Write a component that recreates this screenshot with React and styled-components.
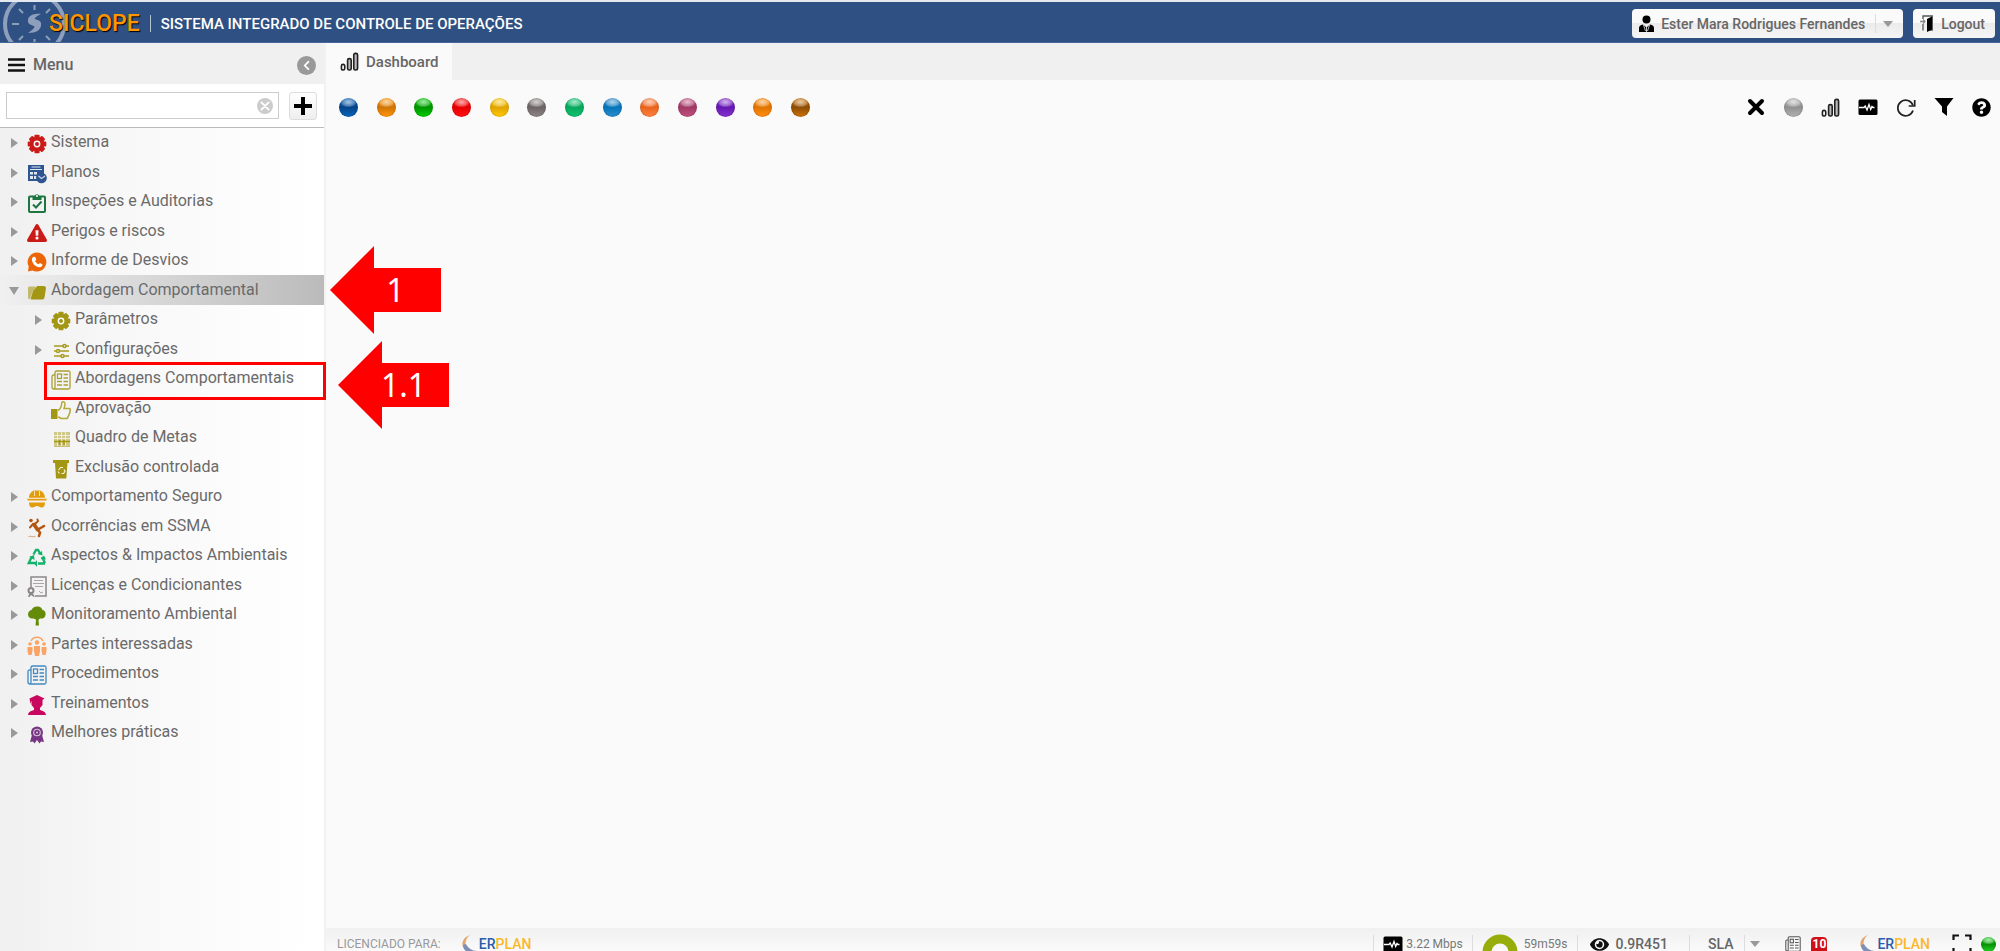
import React from "react";
import styled, { createGlobalStyle, css } from "styled-components";
import { FaExclamationTriangle, FaQuestionCircle, FaChevronLeft, FaEye } from "react-icons/fa";

const GlobalStyle = createGlobalStyle`
  * { box-sizing: border-box; }
  body { margin: 0; font-family: Roboto, "Liberation Sans", sans-serif; color: #666; background: #fafafa; }
  button, input { font: inherit; color: inherit; }
  button { padding: 0; border: 0; background: none; cursor: pointer; }
  a { color: inherit; text-decoration: none; }
  ul { margin: 0; padding: 0; list-style: none; }
  svg { display: block; flex: none; }
`;

/* ---------- page frame ---------- */

const Page = styled.div`
  height: 100vh;
  display: flex;
  flex-direction: column;
  overflow: hidden;
`;

const Header = styled.header`
  flex: none;
  height: 43px;
  border-top: 2px solid #e4e9ef;
  border-bottom: 1px solid #46659a;
  background: #2f5082;
  display: flex;
  align-items: center;
  gap: 10px;
  padding: 3px 5px 0 0;
  overflow: hidden;
`;

const Brand = styled.div`
  display: flex;
  align-items: center;
`;

const BrandName = styled.span`
  margin-left: -20px;
  font-size: 23px;
  line-height: 28px;
  font-weight: 500;
  color: #ff9500;
  text-shadow: 1px 1px 1px #000;
`;

const HeaderRule = styled.span`
  width: 1px;
  height: 17px;
  background: #b4c1d5;
`;

const SystemTitle = styled.h1`
  margin: 0;
  flex: 1;
  font-size: 15px;
  line-height: 20px;
  font-weight: 500;
  color: #fff;
`;

const HeaderButton = styled.button`
  height: 29px;
  padding: 0 10px 0 7px;
  display: flex;
  align-items: center;
  gap: 7px;
  border-radius: 4px;
  background: linear-gradient(#fafafa 50%, #ebebeb 50%, #f6f6f6);
  font-size: 14px;
  line-height: 20px;
  font-weight: 500;
  white-space: nowrap;
`;

const Split = styled.span`
  width: 1px;
  height: 19px;
  margin-left: ${(p) => p.$space || 0}px;
  background: #ddd;
`;

const Caret = styled.span`
  width: 0;
  height: 0;
  border: 5px solid transparent;
  border-bottom: 0;
  border-top: 6px solid #999;
`;

const Body = styled.div`
  flex: 1;
  min-height: 0;
  display: flex;
`;

/* ---------- side menu ---------- */

const Sidebar = styled.nav`
  flex: none;
  width: 326px;
  position: relative;
  z-index: 1;
  display: flex;
  flex-direction: column;
  border-right: 2px solid #f2f2f2;
  background: #fff;
`;

const MenuBar = styled.div`
  height: 41px;
  padding: 3px 8px 0;
  display: flex;
  align-items: center;
  gap: 8px;
  background: #f0f0f0;
`;

const MenuTitle = styled.h2`
  margin: 0;
  flex: 1;
  font-size: 16px;
  line-height: 20px;
  font-weight: 500;
`;

const RoundButton = styled.button`
  width: ${(p) => p.$size}px;
  height: ${(p) => p.$size}px;
  display: grid;
  place-items: center;
  border-radius: 50%;
  background: ${(p) => p.$tone};
  color: #fff;
`;

const SearchBar = styled.div`
  height: 44px;
  padding: 0 7px 0 6px;
  display: flex;
  align-items: center;
  gap: 10px;
  border-bottom: 1px solid #bbb;
`;

const SearchField = styled.label`
  flex: 1;
  height: 27px;
  padding: 0 5px;
  display: flex;
  align-items: center;
  border: 1px solid #ccc;
  background: #fff;
`;

const SearchInput = styled.input`
  flex: 1;
  min-width: 0;
  border: 0;
  outline: 0;
  padding: 0;
  background: none;
  font-size: 16px;
`;

const AddButton = styled.button`
  width: 28px;
  height: 28px;
  display: grid;
  place-items: center;
  border: 1px solid #ddd;
  border-radius: 3px;
  background: linear-gradient(#fff, #eee);
`;

const Tree = styled.ul`
  flex: 1;
  background: linear-gradient(to right, #f0f0f0, #f8f8f8 40%, #fff 98%);
`;

const TreeRow = styled.li`
  position: relative;
  height: 29px;
  padding-left: ${(p) => 9 + p.$depth * 24}px;
  display: flex;
  align-items: center;
  &:nth-child(even) { height: 30px; }
  ${(p) => p.$selected && css`background: linear-gradient(to right, #f0f0f0, #bbb);`}
`;

const Toggle = styled.button`
  width: 18px;
  height: 20px;
  display: flex;
  align-items: center;
  padding: 1px 0 0 ${(p) => (p.$open ? 0 : 2)}px;
`;

const ToggleMark = styled.span`
  width: 0;
  height: 0;
  border: 5px solid transparent;
  ${(p) => p.$open
    ? css`border-bottom: 0; border-top: 8px solid #999;`
    : css`border-right: 0; border-left: 7px solid #999;`}
`;

const Leaf = styled.span`
  width: 18px;
`;

const TreeLink = styled.a`
  display: flex;
  align-items: center;
  gap: 4px;
  color: #6a6a6a;
  font-size: 16px;
  line-height: 22px;
  white-space: nowrap;
  svg { margin-top: 3px; }
`;

const TreeLabel = styled.span`
  padding-bottom: 1px;
`;

const Outline = styled.span`
  position: absolute;
  z-index: 1;
  left: 44px;
  right: -2px;
  top: -2px;
  height: 38px;
  border: 3px solid #f00;
  pointer-events: none;
`;

const Callout = styled.span`
  position: absolute;
  z-index: 2;
  left: ${(p) => p.$left}px;
  top: ${(p) => p.$top}px;
  width: 111px;
  height: 88px;
  padding-left: 20px;
  display: grid;
  place-items: center;
  background: #f00;
  clip-path: polygon(0 50%, 44px 0, 44px 25%, 100% 25%, 100% 75%, 44px 75%, 44px 100%);
  color: #fff;
  font-family: "Noto Sans", sans-serif;
  font-size: 32px;
  line-height: 40px;
`;

/* ---------- workspace ---------- */

const Workspace = styled.main`
  flex: 1;
  min-width: 0;
  display: flex;
  flex-direction: column;
  background: #fafafa;
`;

const Tabs = styled.div`
  height: 37px;
  background: #f0f0f0;
`;

const Tab = styled.button`
  height: 37px;
  padding: 0 13px 0 14px;
  display: flex;
  align-items: center;
  gap: 7px;
  background: #fafafa;
  font-size: 15px;
  line-height: 20px;
  font-weight: 500;
`;

const Toolbar = styled.div`
  height: 54px;
  padding: 0 8px 0 13px;
  display: flex;
  align-items: center;
  justify-content: space-between;
`;

const ToolGroup = styled.div`
  width: ${(p) => p.$width}px;
  display: flex;
  align-items: center;
  justify-content: space-between;
`;

const Ball = styled.button`
  flex: none;
  width: ${(p) => p.$size || 19}px;
  height: ${(p) => p.$size || 19}px;
  border-radius: 50%;
  background:
    radial-gradient(ellipse 44% 28% at 50% 22%, rgba(255, 255, 255, 0.65), rgba(255, 255, 255, 0.3) 70%, transparent 100%),
    linear-gradient(${(p) => p.$light} 10%, ${(p) => p.$dark} 48%, ${(p) => p.$light} 95%);
  box-shadow: inset 0 0 1px 1px rgba(0, 0, 0, 0.12);
`;

const IconButton = styled.button`
  width: 20px;
  height: 20px;
  display: grid;
  place-items: center;
  color: #000;
`;

const Canvas = styled.div`
  flex: 1;
  min-height: 0;
`;

/* ---------- status bar ---------- */

const StatusBar = styled.footer`
  flex: none;
  height: 23px;
  overflow: hidden;
  background: linear-gradient(#f0f0f0, #fafafa);
`;

const StatusLine = styled.div`
  height: 32px;
  padding: 0 4px 0 11px;
  display: flex;
  align-items: center;
`;

const StatusItem = styled.div`
  display: flex;
  align-items: center;
  gap: ${(p) => p.$gap || 6}px;
  margin-left: ${(p) => p.$space || 0}px;
  font-size: ${(p) => (p.$strong ? 14 : 12)}px;
  line-height: 14px;
  font-weight: ${(p) => (p.$strong ? 500 : 400)};
  color: ${(p) => p.$tone || "#777"};
  white-space: nowrap;
`;

const Spacer = styled.span`
  flex: 1;
`;

const Badge = styled.span`
  width: 16px;
  height: 14px;
  border-radius: 4px 4px 0 0;
  background: #d01018;
  color: #fff;
  font-weight: 700;
  text-align: center;
`;

const ErplanWord = styled.span`
  font-size: 14px;
  font-weight: 500;
  color: #2a5caa;
  span { color: #fbb829; }
`;

/* ---------- drawings ---------- */

const Svg = ({ w = 20, h = w, box = "0 0 20 20", children, ...rest }) => (
  <svg width={w} height={h} viewBox={box} fill="none" aria-hidden="true" {...rest}>{children}</svg>
);

const Emblem = () => (
  <Svg w={69} h={64} box="0 0 69 64" stroke="#8d9fbd">
    <circle cx="34.500" cy="32" r="29.500" strokeWidth="4" />
    <path strokeWidth="2" d="M12 32h7M34.500 13v5M34.500 47v5M19 17l4 4M50 17l-4 4M19 48l4-4M50 48l-4-4" />
    <path fill="#8d9fbd" stroke="none" d="M41 22c-8-1-14 2-13 8 1 3 4 3 6 4 1 1 0 2-2 4l-4 3c8 0 14-3 13-10-1-3-4-3-6-4-1-1 2-3 6-5z" />
  </Svg>
);

const Gear = ({ color }) => (
  <Svg>
    <g fill={color}>
      {[0, 45, 90, 135].map((a) => (
        <rect key={a} x="7.400" y="0.700" width="5.200" height="18.600" rx="1" transform={`rotate(${a} 10 10)`} />
      ))}
      <circle cx="10" cy="10" r="7.300" />
    </g>
    <circle cx="10" cy="10" r="2.700" stroke="#fff" strokeWidth="1.400" />
  </Svg>
);

const PlanIcon = () => (
  <Svg>
    <path fill="#2f5591" d="M1 1h16v9a6 6 0 0 0-6 7H1z" />
    <path stroke="#dfe6f1" d="M3 5.500h12M4.500 3h9" strokeWidth="1" />
    <path fill="#dfe6f1" d="M3 8h3v2.500H3zM7 8h3v2.500H7zM3 12h3v3H3zM7 12h2.500v3H7z" />
    <circle cx="14.500" cy="14" r="5.300" fill="#2f5591" />
    <path d="M11.500 12l3 2.500 3.500-2.500" stroke="#c9d5e8" strokeWidth="1.200" />
  </Svg>
);

const ClipboardIcon = () => (
  <Svg stroke="#1f7540">
    <rect x="2" y="3.500" width="16" height="15.500" rx="1" strokeWidth="2" />
    <path fill="#1f7540" stroke="none" d="M5.500 3h2.200a2.400 2.400 0 0 1 4.600 0h2.200v4h-9z" />
    <circle cx="10" cy="3" r="1" fill="#fff" stroke="none" />
    <path strokeWidth="2" d="M6 11.500l3 3 5.500-6" />
  </Svg>
);

const PhoneIcon = () => (
  <Svg>
    <path fill="#ec6608" d="M10 .5a9.500 9.500 0 1 1-4.600 17.900L1 19.500l.7-5A9.500 9.500 0 0 1 10 .5z" />
    <path fill="#fff" d="M6.500 4.800l1.800.2 1 2.700-1.200 1.400c.7 1.600 1.900 2.600 3.400 3.200l1.300-1.300 2.600 1.300c.2 1.800-1 3-2.800 3-4-.3-7.300-3.500-7.700-7.500 0-1.400.6-2.500 1.600-3z" />
  </Svg>
);

const FolderIcon = () => (
  <Svg>
    <path fill="#c2ba6c" d="M1 6q0-1.500 1.500-1.500H8L9.500 6H16v2.500H6L3 17H2q-1 0-1-1.500z" />
    <path fill="#a39612" d="M8 7.500l2-3.500h6.500q2.500 0 2.500 2l-1.500 9.500q-.4 2-2 2H3.500L6 9q.4-1.500 2-1.500z" />
  </Svg>
);

const SlidersIcon = () => (
  <Svg stroke="#a89c1c" strokeWidth="1.500">
    <path d="M3 5h15M3 10h15M3 15h15" />
    <g fill="#f8f8f4"><circle cx="13.500" cy="5" r="1.500" /><circle cx="7" cy="10" r="1.500" /><circle cx="11.500" cy="15" r="1.500" /></g>
  </Svg>
);

const NewsIcon = ({ color, size = 20 }) => (
  <Svg w={size} stroke={color} strokeWidth="1.300">
    <path d="M4 5H2.500Q1 5 1 6.500V17q0 2 2 2h14.500q1.500 0 1.500-1.500V2.500Q19 1 17.500 1h-12Q4 1 4 2.500V17q0 1.500-1 2" />
    <rect x="6.500" y="4" width="4" height="4.500" />
    <path d="M12.500 4.500H17M12.500 8H17M6 11.500h5M12.500 11.500H17M6 15h5M12.500 15H17" />
  </Svg>
);

const ThumbIcon = () => (
  <Svg>
    <path fill="#a39612" d="M0 9h6.500v10H0z" />
    <path stroke="#b5a93b" strokeWidth="1.500" d="M7 10.500c2.500-1.500 3.500-4 3.800-7.500.2-2 3.200-1.800 3.200 1 0 1.700-.5 3-1 4.500h5c1.700.4 1.600 2 .7 3 .4 1 0 2-.7 2.500.3 1-.2 2-1 2.400 0 1.300-.6 2.100-2 2.100h-4c-1.500 0-2.500-1.500-4-1.500" />
  </Svg>
);

const BoardIcon = () => (
  <Svg>
    <path fill="#cfc88a" d="M3 3h16v14H3z" />
    <path stroke="#f6f5e8" strokeWidth=".8" d="M2 6.500h18M2 9.500h18M6.500 3v14M10.500 3v14M14.500 3v14" />
    <path stroke="#a39612" strokeWidth="1.500" d="M3 12.500h16M8.500 11v5M13 11v5" />
    <path stroke="#c8c077" d="M3 17.500h16" />
  </Svg>
);

const BinIcon = () => (
  <Svg>
    <path fill="#a39612" d="M2 1h16v3H2zM4 4h12.500l-1.200 15.500H5z" />
    <path stroke="#f4f1d8" strokeWidth="1.200" d="M7.500 11l2-2.500h2.500M13 10.500l1 2-1.500 2H10.500M8.500 14.500L7 12.500" />
  </Svg>
);

const HelmetIcon = () => (
  <Svg fill="#e39c0c">
    <path d="M2 10c0-4 2.300-6.500 5-7.500h6c2.700 1 5 3.500 5 7.500zM.5 10.500h19v2H.5zM2 14.500h16c0 3-1 5-3.500 5-2 0-2.500-1.500-4.500-1.500s-2.500 1.500-4.500 1.500C3 19.500 2 17.500 2 14.500z" />
    <path stroke="#fff" strokeWidth=".7" d="M7.500 3v5M12.500 3v5M1 10.200h18" />
  </Svg>
);

const SlipIcon = () => (
  <Svg stroke="#b4560f" strokeWidth="2" strokeLinecap="round">
    <circle cx="4" cy="2.500" r="1.800" fill="#b4560f" stroke="none" />
    <path strokeWidth="3.800" d="M7 6.500l3.500 5" />
    <path d="M6 6L3 9.500M8 6l3-3-.5-1.500" />
    <path strokeWidth="2.600" d="M11 11.500l6-3.500M10.500 11.500l2.500 3-1 3.500" />
    <path strokeWidth="1.200" stroke="#d8ab86" d="M2 18.500c2-1 4 1 6 0" />
  </Svg>
);

const RecycleIcon = () => (
  <Svg stroke="#13b26b" strokeWidth="2.300">
    <path d="M6.500 7.500L9 3h2l2.500 4M5 9.500L1.800 16H8M18 16l-3-6M11 16.500h7" />
    <path fill="#13b26b" stroke="none" d="M15.500 8.500L10.500 7l4.500-3zM2 10l5-2 .5 5zM10 20l-3-3.500 3-3.500zM13.500 12l3.500-3.500 2 4z" />
  </Svg>
);

const LicenseIcon = () => (
  <Svg w={20} h={22} box="0 0 20 22" stroke="#8d8688">
    <path strokeWidth="1.500" d="M4 11V1h15v19H8" />
    <path d="M7 4.500h9M6 7.500h11M8 10.500h8M12 15l2 2 2-1" stroke="#aaa5a7" />
    <circle cx="4" cy="14.500" r="2.500" strokeWidth="2" />
    <path fill="#8d8688" stroke="none" d="M1 21l1.500-4h3L8 21l-2-.5L4 19l-1.500 2z" />
  </Svg>
);

const TreeIcon = () => (
  <Svg fill="#648c08">
    <path d="M10 .5c3-.3 5 1.500 5.300 3.200C18 4.500 19 6.500 18.500 9c-.5 3-3 4-5.500 3.500-.7.500-1.300.9-1.500 1.500L12 19.500H8.500L9 14c-.7-1-1.500-1.400-2.500-1.500C3 13 1 11 1 8.300 1 6 2.500 4.500 4.500 4 5 2 7.500.7 10 .5z" />
  </Svg>
);

const PeopleIcon = () => (
  <Svg fill="#faa364">
    <circle cx="3" cy="8" r="1.800" /><circle cx="10" cy="6.500" r="2.200" /><circle cx="17" cy="8" r="1.800" />
    <path d="M.5 11h5v4l-1 4h-3l-1-4zM14.500 11h5v4l-1 4h-3l-1-4zM7 10h6v5l-1 5H8l-1-5z" />
    <path stroke="#faa364" fill="none" strokeWidth="1.300" d="M4 5c2.500-5 9.500-5 12 0" />
  </Svg>
);

const GraduateIcon = () => (
  <Svg fill="#c8075f">
    <path d="M10 0l7.500 3.500-2 1.500v5L13 13v2c2.500 1 5.500 1 6 5H1c.5-4 3.500-4 6-5v-2l-2.500-3V5.500L3.500 9l-1-5.500z" />
  </Svg>
);

const AwardIcon = () => (
  <Svg fill="#773683">
    <path d="M5 11l-2 7 3-.5 1.500 2L10 16l2.500 3.500 1.500-2 3 .5-2-7z" />
    <circle cx="10" cy="8.500" r="6" />
    <circle cx="10" cy="8.500" r="3.300" fill="none" stroke="#d9c3dd" strokeWidth="1.100" />
    <circle cx="10" cy="8.500" r="1" fill="#d9c3dd" />
  </Svg>
);

const BarsIcon = () => (
  <Svg w={19} stroke="#222" strokeWidth="1.700">
    <rect x="1.500" y="13" width="3.500" height="6" rx="1.700" fill="#fff" />
    <rect x="8" y="7" width="3.800" height="12" rx="1.700" fill="#bbb" />
    <rect x="14.500" y="1.500" width="4" height="17.500" rx="1.700" fill="#bbb" />
  </Svg>
);

const PulseIcon = () => (
  <Svg>
    <rect x=".5" y="2.500" width="19" height="15.500" rx="1.500" fill="#000" />
    <path stroke="#fff" strokeWidth="1.300" d="M1 10.500h5l1.200-1.500L9 13l2-5.500 1.700 5 1.300-3 1 1h1.500" />
  </Svg>
);

const ReloadIcon = () => (
  <Svg stroke="#222" strokeWidth="1.700">
    <path d="M17 8.500A7.800 7.800 0 1 0 17 13.500" />
    <path d="M18.700 3v6h-6" />
  </Svg>
);

const FunnelIcon = () => (
  <Svg><path fill="#000" d="M.5 1h19L13 9.500V19l-5-4V9.500z" /></Svg>
);

const CrossIcon = ({ size = 20, color = "#000", weight = 4 }) => (
  <Svg w={size}><path d="M4 4l12 12M16 4L4 16" stroke={color} strokeWidth={weight} strokeLinecap="round" /></Svg>
);

const PlusIcon = () => (
  <Svg><path d="M10 1v18M1 10h18" stroke="#000" strokeWidth="4" /></Svg>
);

const BurgerIcon = () => (
  <Svg w={17} h={14} box="0 0 17 14"><path d="M0 1.500h17M0 7h17M0 12.500h17" stroke="#111" strokeWidth="2.600" /></Svg>
);

const UserIcon = () => (
  <Svg w={15} h={18} box="0 0 15 18" fill="#000">
    <circle cx="7.500" cy="4.500" r="4" />
    <path d="M0 17v-4q0-3 4-3.500l3.500 3 3.500-3q4 .5 4 3.500v4z" />
    <path stroke="#eee" strokeWidth=".8" d="M7.500 11v6M4.500 10l2 6M10.500 10l-2 6" />
  </Svg>
);

const DoorIcon = () => (
  <Svg w={14} h={18} box="0 0 14 18">
    <path stroke="#555" strokeWidth="1.300" d="M3 4V1h9.300v14H8M3 9v6.500" />
    <path fill="#000" d="M7 4l5-2.500v13L7 17z" />
    <path stroke="#888" strokeWidth="1.300" d="M0 6.500h5M3 4.500l2 2-2 2" />
  </Svg>
);

const Donut = styled(({ className }) => (
  <Svg w={36} box="0 0 36 36" className={className}><circle cx="18" cy="18" r="13" stroke="#97ae0a" strokeWidth="9" /></Svg>
))`
  margin-top: 16px;
`;

const ExpandIcon = () => (
  <Svg stroke="#111" strokeWidth="2.200"><path d="M1.500 6V1.500H7M13 1.500h5.500V6M18.500 14v4.500H13M7 18.500H1.500V14" /></Svg>
);

const Swoosh = () => (
  <Svg w={16} h={20} box="0 0 16 20">
    <path fill="#e5a66c" d="M9 1C3 3 0 8 2 13l3-1C4 8 5 4 9 1z" />
    <path fill="#7d8fb5" d="M2 11c0 7 7 9 14 6-5 0-9-3-11-7z" />
  </Svg>
);

const Erplan = () => (
  <StatusItem $gap={2}>
    <Swoosh />
    <ErplanWord>ER<span>PLAN</span></ErplanWord>
  </StatusItem>
);

/* ---------- data ---------- */

const OLIVE = "#a39612";

const MENU = [
  { label: "Sistema", icon: <Gear color="#cb1b18" /> },
  { label: "Planos", icon: <PlanIcon /> },
  { label: "Inspeções e Auditorias", icon: <ClipboardIcon /> },
  { label: "Perigos e riscos", icon: <FaExclamationTriangle size={20} color="#cb1b18" /> },
  { label: "Informe de Desvios", icon: <PhoneIcon /> },
  { label: "Abordagem Comportamental", icon: <FolderIcon />, open: true, callout: ["1", 330, -29] },
  { label: "Parâmetros", icon: <Gear color={OLIVE} />, depth: 1 },
  { label: "Configurações", icon: <SlidersIcon />, depth: 1 },
  { label: "Abordagens Comportamentais", icon: <NewsIcon color="#aa9f35" />, depth: 1, leaf: true, callout: ["1.1", 338, -23], outlined: true },
  { label: "Aprovação", icon: <ThumbIcon />, depth: 1, leaf: true },
  { label: "Quadro de Metas", icon: <BoardIcon />, depth: 1, leaf: true },
  { label: "Exclusão controlada", icon: <BinIcon />, depth: 1, leaf: true },
  { label: "Comportamento Seguro", icon: <HelmetIcon /> },
  { label: "Ocorrências em SSMA", icon: <SlipIcon /> },
  { label: "Aspectos & Impactos Ambientais", icon: <RecycleIcon /> },
  { label: "Licenças e Condicionantes", icon: <LicenseIcon /> },
  { label: "Monitoramento Ambiental", icon: <TreeIcon /> },
  { label: "Partes interessadas", icon: <PeopleIcon /> },
  { label: "Procedimentos", icon: <NewsIcon color="#4389c0" /> },
  { label: "Treinamentos", icon: <GraduateIcon /> },
  { label: "Melhores práticas", icon: <AwardIcon /> },
];

const BALLS = [
  ["#0a62b8", "#064488"], ["#ff9408", "#cf7406"], ["#00c800", "#009400"], ["#ff1010", "#e60000"],
  ["#ffc800", "#e0a400"], ["#8c8484", "#6c6464"], ["#10c070", "#08a85c"], ["#2c8ccc", "#0474b8"],
  ["#ff8040", "#e8641c"], ["#c05080", "#a03864"], ["#8430d0", "#6418b0"], ["#ff8c10", "#e07400"],
  ["#c87008", "#8c4c04"],
];

const MenuItem = ({ label, icon, depth = 0, leaf, open, callout, outlined }) => (
  <TreeRow $depth={depth} $selected={open}>
    {leaf ? <Leaf /> : (
      <Toggle $open={open} aria-label={label} aria-expanded={!!open}><ToggleMark $open={open} /></Toggle>
    )}
    <TreeLink href="#">{icon}<TreeLabel>{label}</TreeLabel></TreeLink>
    {outlined && <Outline />}
    {callout && <Callout $left={callout[1]} $top={callout[2]}>{callout[0]}</Callout>}
  </TreeRow>
);

export default function App() {
  return (
    <Page>
      <GlobalStyle />
      <Header>
        <Brand><Emblem /><BrandName>SICLOPE</BrandName></Brand>
        <HeaderRule />
        <SystemTitle>SISTEMA INTEGRADO DE CONTROLE DE OPERAÇÕES</SystemTitle>
        <HeaderButton>
          <UserIcon />Ester Mara Rodrigues Fernandes<Split $space={3} /><Caret />
        </HeaderButton>
        <HeaderButton><DoorIcon />Logout</HeaderButton>
      </Header>
      <Body>
        <Sidebar>
          <MenuBar>
            <BurgerIcon />
            <MenuTitle>Menu</MenuTitle>
            <RoundButton $size={19} $tone="#999" aria-label="Recolher menu"><FaChevronLeft size={11} /></RoundButton>
          </MenuBar>
          <SearchBar>
            <SearchField>
              <SearchInput type="text" aria-label="Pesquisar no menu" />
              <RoundButton $size={16} $tone="#ccc" aria-label="Limpar"><CrossIcon size={12} color="#fff" weight={3} /></RoundButton>
            </SearchField>
            <AddButton aria-label="Adicionar"><PlusIcon /></AddButton>
          </SearchBar>
          <Tree>{MENU.map((item) => <MenuItem key={item.label} {...item} />)}</Tree>
        </Sidebar>
        <Workspace>
          <Tabs><Tab><BarsIcon />Dashboard</Tab></Tabs>
          <Toolbar>
            <ToolGroup $width={471}>
              {BALLS.map(([light, dark], i) => <Ball key={light} $light={light} $dark={dark} aria-label={`Painel ${i + 1}`} />)}
            </ToolGroup>
            <ToolGroup $width={246}>
              <IconButton aria-label="Fechar"><CrossIcon /></IconButton>
              <Ball $light="#b0b0b0" $dark="#909090" aria-label="Estado" />
              <IconButton aria-label="Gráficos"><BarsIcon /></IconButton>
              <IconButton aria-label="Monitor"><PulseIcon /></IconButton>
              <IconButton aria-label="Atualizar"><ReloadIcon /></IconButton>
              <IconButton aria-label="Filtrar"><FunnelIcon /></IconButton>
              <IconButton aria-label="Ajuda"><FaQuestionCircle size={19} /></IconButton>
            </ToolGroup>
          </Toolbar>
          <Canvas />
          <StatusBar>
            <StatusLine>
              <StatusItem $tone="#999">LICENCIADO PARA:</StatusItem>
              <StatusItem $space={20}><Erplan /></StatusItem>
              <Spacer />
              <Split />
              <StatusItem $space={9} $gap={3}><PulseIcon />3.22 Mbps</StatusItem>
              <Split $space={9} />
              <StatusItem $space={9}><Donut />59m59s</StatusItem>
              <Split $space={10} />
              <StatusItem $space={12} $strong $tone="#666"><FaEye size={19} color="#111" />0.9R451</StatusItem>
              <Split $space={21} />
              <StatusItem $space={18} $strong $tone="#666">SLA</StatusItem>
              <Split $space={11} />
              <StatusItem $space={5}><Caret /></StatusItem>
              <StatusItem $space={25} $gap={10}><NewsIcon color="#555" size={16} /><Badge>10</Badge></StatusItem>
              <StatusItem $space={32}><Erplan /></StatusItem>
              <StatusItem $space={22} $gap={9}><ExpandIcon /><Ball $size={15} $light="#20d020" $dark="#089008" aria-label="Conectado" /></StatusItem>
            </StatusLine>
          </StatusBar>
        </Workspace>
      </Body>
    </Page>
  );
}
